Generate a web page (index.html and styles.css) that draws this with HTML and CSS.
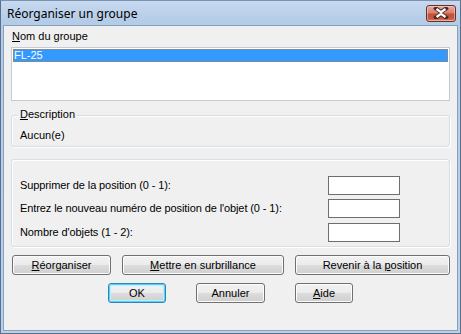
FILE: index.html
```html
<!DOCTYPE html>
<html>
<head>
<meta charset="utf-8">
<link rel="stylesheet" href="styles.css">
</head>
<body>
<div class="window">
  <div class="titlebar">
    <span class="title">Réorganiser un groupe</span>
    <span class="close">
      <svg width="16" height="12" viewBox="0 0 16 12">
        <path d="M3 1.5 L8 5 L13 1.5 M3 10.5 L8 7 L13 10.5" fill="none" stroke="#4a2a26" stroke-width="4" stroke-linecap="square"/>
        <path d="M3.5 2 L8 5.2 L12.5 2 M3.5 10 L8 6.8 L12.5 10" fill="none" stroke="#ffffff" stroke-width="2.2"/>
      </svg>
    </span>
  </div>
  <div class="client">
    <div class="label"><u>N</u>om du groupe</div>
    <div class="listbox">
      <div class="item">FL-25</div>
    </div>
    <div class="group desc">
      <span class="legend"><u>D</u>escription</span>
      <div class="desc-text">Aucun(e)</div>
    </div>
    <div class="group fields">
      <div class="row"><span class="lbl">Supprimer de la position (0 - 1):</span><span class="edit"></span></div>
      <div class="row"><span class="lbl">Entrez le nouveau numéro de position de l'objet (0 - 1):</span><span class="edit"></span></div>
      <div class="row"><span class="lbl">Nombre d'objets (1 - 2):</span><span class="edit"></span></div>
    </div>
    <div class="btnrow top">
      <span class="btn w-reorg"><span><u>R</u>éorganiser</span></span>
      <span class="btn w-mettre"><span><u>M</u>ettre en surbrillance</span></span>
      <span class="btn w-revenir"><span>Revenir à la <u>p</u>osition</span></span>
    </div>
    <div class="btnrow bottom">
      <span class="btn default w-ok"><span>OK</span></span>
      <span class="btn w-annuler"><span>Annuler</span></span>
      <span class="btn w-aide"><span><u>A</u>ide</span></span>
    </div>
  </div>
</div>
</body>
</html>
```
FILE: styles.css
```css
* { box-sizing: border-box; }
html, body { margin: 0; padding: 0; }
body {
  width: 461px;
  height: 334px;
  overflow: hidden;
  background: #f0f0f0;
  font-family: "Liberation Sans", Arial, sans-serif;
  font-size: 11px;
  color: #000;
}
.window {
  width: 461px;
  height: 334px;
  display: flex;
  flex-direction: column;
  background: linear-gradient(#c6d9ef, #b5cce7 20px, #b9d1ea);
  border: 1px solid #5a6f8a;
  border-top-color: #7c93b0;
}
.titlebar {
  height: 24px;
  display: flex;
  align-items: center;
  justify-content: space-between;
  padding: 0 4px 0 6px;
}
.title {
  font-family: "Noto Sans", "DejaVu Sans", sans-serif;
  font-size: 12px;
  color: #000;
  margin-top: 1px;
}
.close {
  width: 30px;
  height: 17px;
  border: 1px solid #62322b;
  border-radius: 3px;
  background: linear-gradient(#e9a99c, #d8826f 45%, #c44f37 55%, #c85a42 85%, #d98a6f);
  display: flex;
  align-items: center;
  justify-content: center;
  box-shadow: inset 0 0 0 1px rgba(255,220,210,0.5);
}
.client {
  flex: 1;
  margin: 0 2px 2px 2px;
  background: #f0f0f0;
  border: 1px solid #86a0c0;
  padding: 4px 7px 0 7px;
  display: flex;
  flex-direction: column;
}
.label {
  line-height: 13px;
  padding-left: 1px;
  height: 13px;
  margin-bottom: 4px;
}
.listbox {
  height: 54px;
  background: #fff;
  border: 1px solid #c5cbd6;
  padding: 1px;
}
.item {
  height: 13px;
  line-height: 12px;
  background: #3399ff;
  color: #fff;
  padding-left: 1px;
  outline: 1px dotted #c87e2a;
  outline-offset: -1px;
}
.group {
  position: relative;
  border: 1px solid #d5dfe5;
  border-radius: 3px;
  box-shadow: inset 1px 1px 0 #fff, 1px 1px 0 #fff;
}
.desc {
  margin-top: 14px;
  height: 32px;
  padding: 13px 0 0 8px;
}
.legend {
  position: absolute;
  left: 6px;
  top: -8px;
  background: #f0f0f0;
  padding: 0 2px;
  line-height: 13px;
}
.desc-text { line-height: 13px; }
.fields {
  margin-top: 12px;
  height: 88px;
  padding: 16px 0 0 8px;
  display: flex;
  flex-direction: column;
}
.row {
  height: 25px;
  display: flex;
  align-items: flex-start;
}
.lbl {
  width: 308px;
  line-height: 13px;
  padding-top: 3px;
  letter-spacing: -0.1px;
}
.edit {
  width: 72px;
  height: 19px;
  background: #fff;
  border: 1px solid #6e6e6e;
}
.btnrow {
  display: flex;
}
.btnrow.top {
  margin-top: 8px;
  padding-left: 1px;
  gap: 11px;
}
.btnrow.bottom {
  margin-top: 8px;
  justify-content: center;
  gap: 30px;
}
.btn {
  height: 20px;
  display: flex;
  align-items: center;
  justify-content: center;
  border: 1px solid #707070;
  border-radius: 3px;
  background: linear-gradient(#f2f2f2, #ebebeb 50%, #dddddd 50%, #cfcfcf);
  box-shadow: inset 0 0 0 1px #fcfcfc;
  line-height: 13px;
  white-space: pre;
}
.btn.default {
  border-color: #3c7fb1;
  box-shadow: inset 0 0 0 1px #48d8fb, inset 0 0 0 2px #c0ecfb;
}
.w-reorg { width: 99px; }
.w-mettre { width: 162px; }
.w-revenir { width: 155px; }
.w-ok { width: 58px; }
.w-annuler { width: 69px; }
.w-aide { width: 58px; }
u { text-decoration: underline; text-underline-offset: 1px; }
```
